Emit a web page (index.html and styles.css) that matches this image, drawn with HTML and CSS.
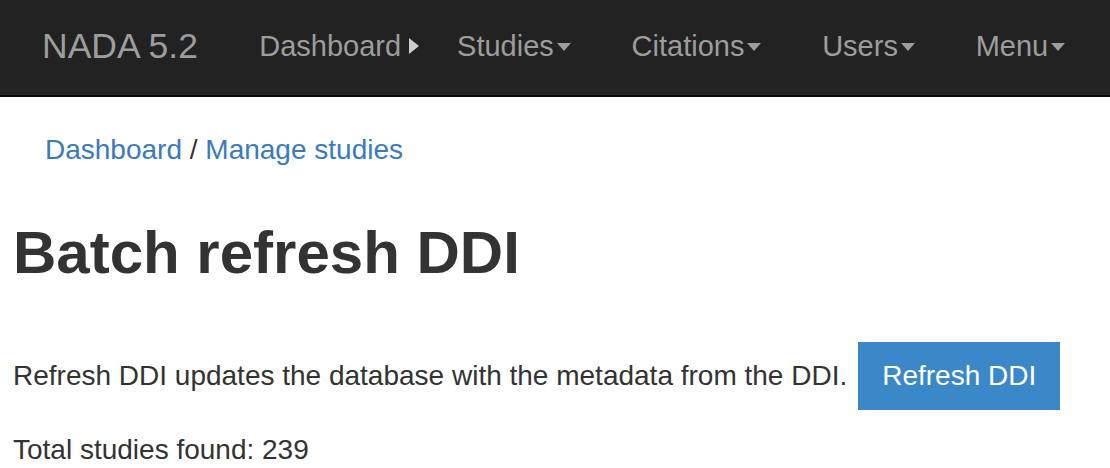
FILE: index.html
```html
<!DOCTYPE html>
<html lang="en">
<head>
<meta charset="utf-8">
<title>Batch refresh DDI</title>
<link rel="stylesheet" href="styles.css">
</head>
<body>
<header class="navbar">
  <a class="brand" href="#">NADA 5.2</a>
  <ul class="nav">
    <li><a class="nav-link nav-link-dash" href="#">Dashboard<span class="arrow-right"></span></a></li>
    <li><a class="nav-link" href="#">Studies<span class="caret"></span></a></li>
    <li><a class="nav-link" href="#">Citations<span class="caret"></span></a></li>
    <li><a class="nav-link" href="#">Users<span class="caret"></span></a></li>
    <li><a class="nav-link" href="#">Menu<span class="caret"></span></a></li>
  </ul>
</header>
<main class="content">
  <nav class="breadcrumb"><a href="#">Dashboard</a> <span class="sep">/</span> <a href="#">Manage studies</a></nav>
  <h1 class="title">Batch refresh DDI</h1>
  <div class="action-row">
    <p class="desc">Refresh DDI updates the database with the metadata from the DDI.</p>
    <button class="btn-primary" type="button">Refresh DDI</button>
  </div>
  <p class="total">Total studies found: 239</p>
</main>
</body>
</html>
```

FILE: styles.css
```css
* { box-sizing: border-box; }
html, body { margin: 0; padding: 0; }
body {
  background: #fff;
  color: #333;
  font-family: "Liberation Sans", Arial, Helvetica, sans-serif;
  font-size: 28px;
  line-height: 40px;
  width: 1110px;
  height: 468px;
  overflow: hidden;
}
a { text-decoration: none; }

.navbar {
  height: 97px;
  background: #222;
  border-bottom: 2px solid #080808;
  display: flex;
  align-items: center;
  padding: 0 0 3px 42px;
}
.brand {
  color: #9d9d9d;
  font-size: 35.5px;
  line-height: 40px;
  margin-right: 31px;
}
.nav {
  list-style: none;
  margin: 0;
  padding: 0;
  display: flex;
  align-items: center;
}
.nav-link {
  color: #9d9d9d;
  font-size: 29px;
  line-height: 40px;
  padding: 0 30.4px;
  display: flex;
  align-items: center;
}
.nav-link-dash { padding-right: 7.5px; }
.arrow-right {
  display: inline-block;
  width: 0;
  height: 0;
  border-top: 8.5px solid transparent;
  border-bottom: 8.5px solid transparent;
  border-left: 10px solid #cfcfcf;
  margin-left: 8px;
  margin-top: -1px;
}
.caret {
  display: inline-block;
  width: 0;
  height: 0;
  border-top: 8px solid #9d9d9d;
  border-left: 7.5px solid transparent;
  border-right: 7.5px solid transparent;
  margin-left: 3px;
  margin-top: 2px;
}

.content { padding: 0 13px; }
.breadcrumb {
  margin-top: 34px;
  padding-left: 32px;
  font-size: 28px;
  line-height: 38px;
  color: #333;
}
.breadcrumb a { color: #3a7bbf; }
.title {
  margin: 51px 0 0;
  font-size: 60px;
  line-height: 66px;
  font-weight: bold;
  color: #333;
}
.action-row {
  margin-top: 56px;
  display: flex;
  align-items: center;
  gap: 11px;
}
.desc { margin: 0; }
.btn-primary {
  width: 202px;
  height: 68px;
  background: #3a88c8;
  color: #fff;
  border: none;
  font-family: inherit;
  font-size: 28px;
  line-height: 40px;
  padding: 0;
}
.total { margin: 20px 0 0; }
```
